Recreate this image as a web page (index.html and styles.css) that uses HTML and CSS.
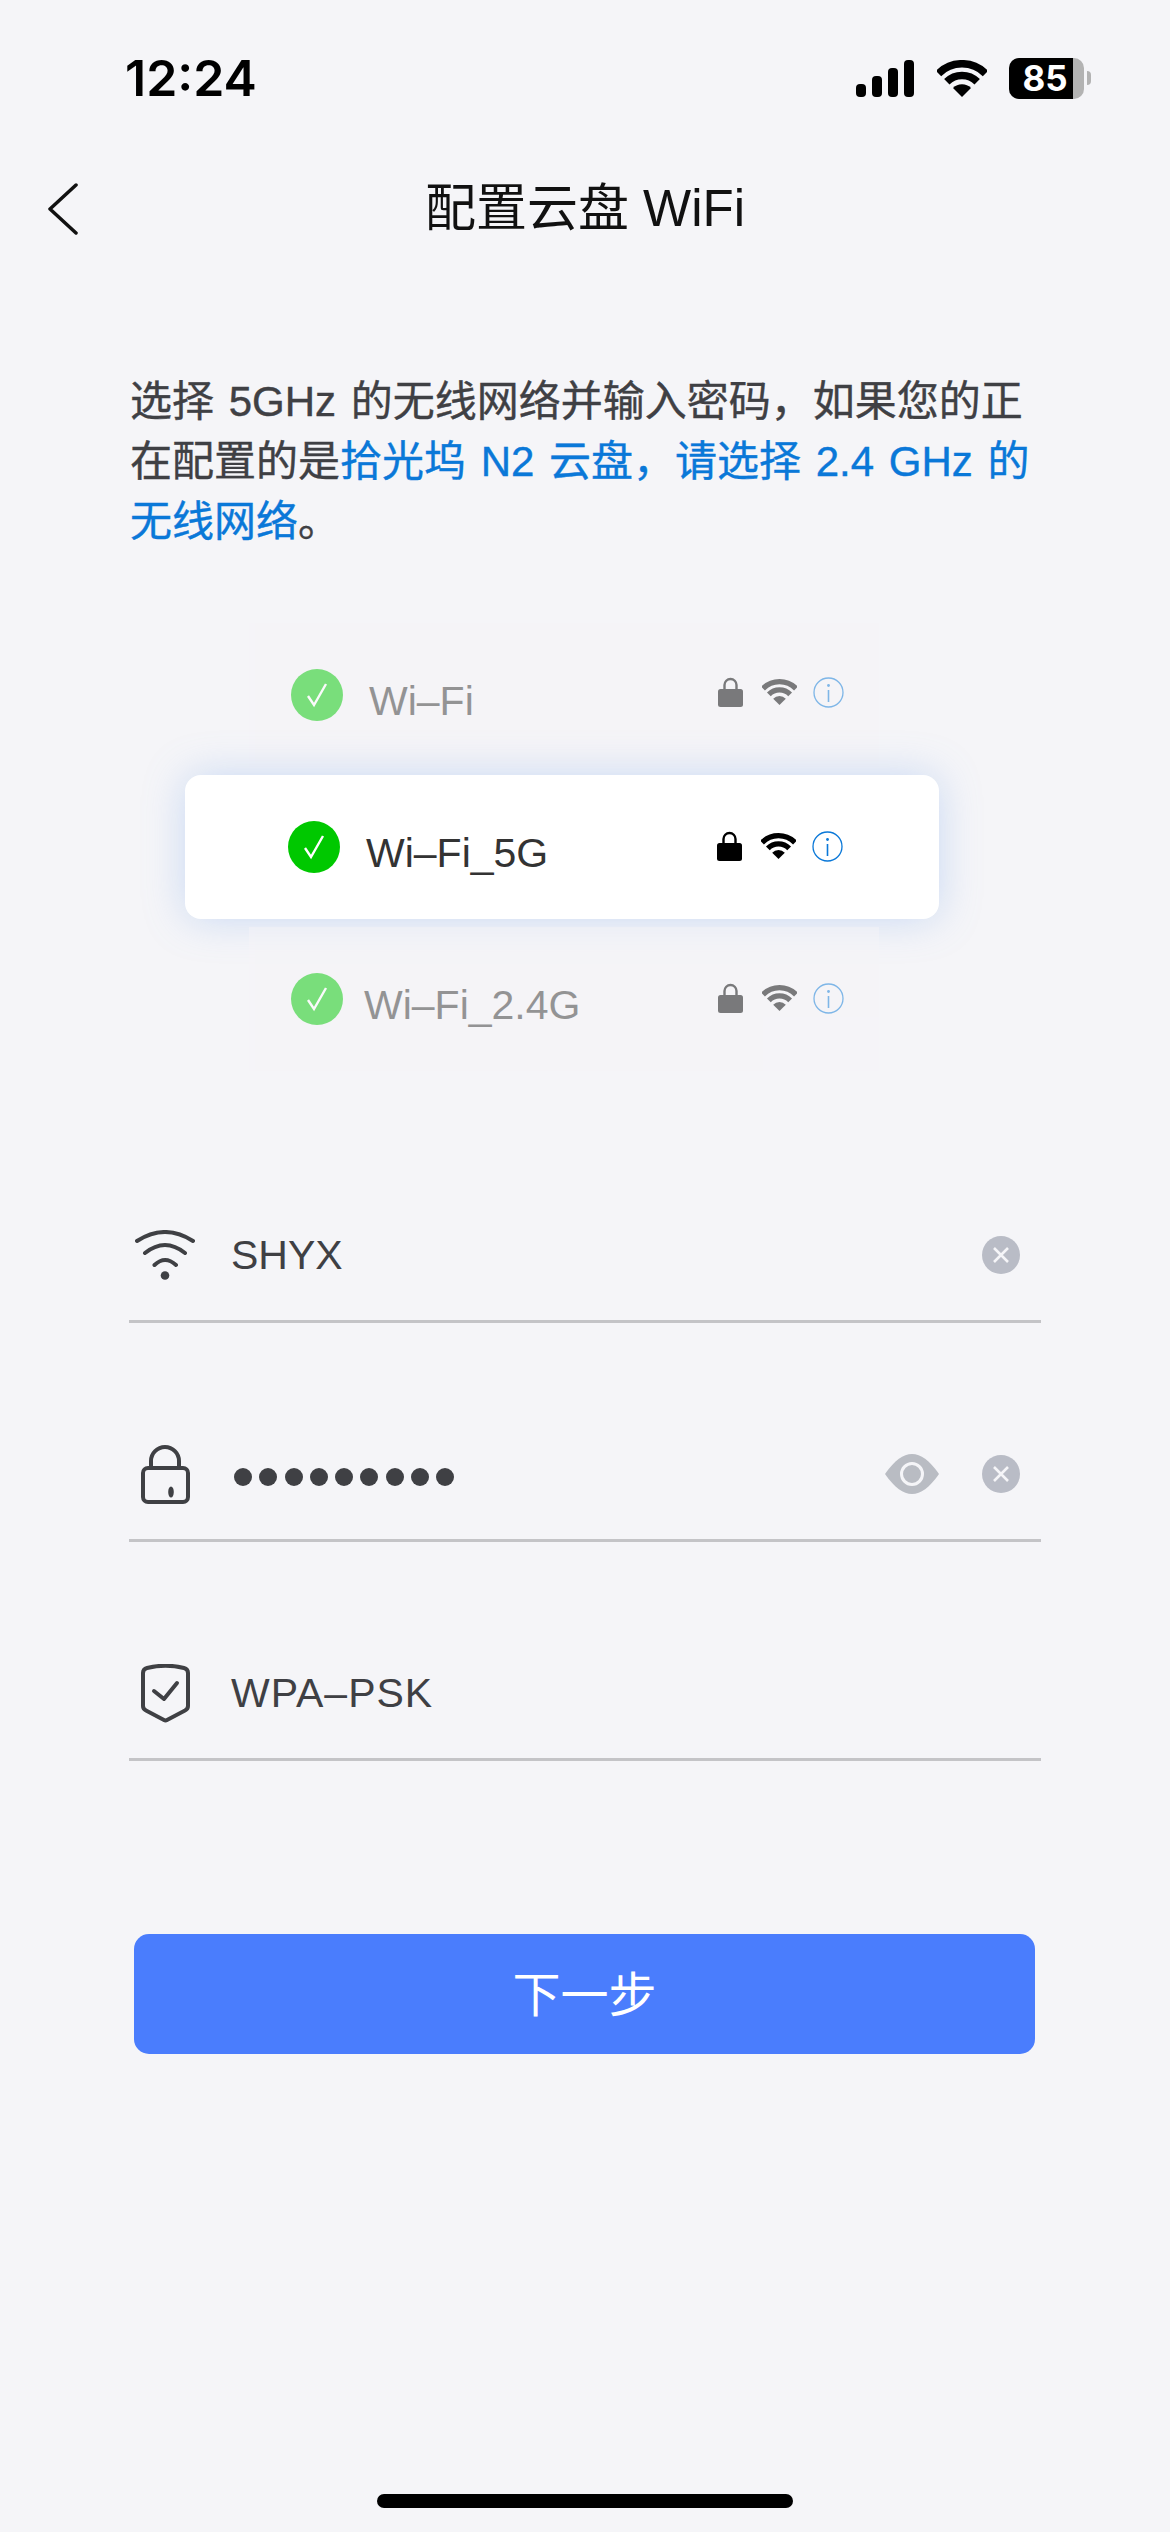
FILE: index.html
```html
<!DOCTYPE html>
<html>
<head>
    <meta charset="utf-8">
    <link rel="stylesheet" href="styles.css">
</head>
<body>
    <svg class="defs" width="0" height="0">
        <symbol id="fan" viewBox="0 0 50 37"><path d="M1.5 13.5a33.2 33.2 0 0 1 47 0M9.8 21.8a21.5 21.5 0 0 1 30.4 0" fill="none" stroke="currentColor" stroke-width="7.6"/><path d="M25 37 16 28a12.7 12.7 0 0 1 18 0z" fill="currentColor"/></symbol>
        <symbol id="tick" viewBox="0 0 28 28"><path d="M5 15l6 9L23 3" fill="none" stroke="#fff" stroke-width="2.4"/></symbol>
        <symbol id="padlock" viewBox="0 0 25 30"><path d="M6.5 13V8a6 6 0 0 1 12 0v5" fill="none" stroke="currentColor" stroke-width="2.4"/><rect y="12" width="25" height="18" rx="2.5" fill="currentColor"/></symbol>
        <symbol id="info" viewBox="0 0 31 31"><circle cx="15.5" cy="15.5" r="14.5" fill="none" stroke="#0a78d8" stroke-width="1.3"/><rect x="14.7" y="13" width="1.6" height="12" fill="#0a78d8"/><circle cx="15.5" cy="8.5" r="1.4" fill="#0a78d8"/></symbol>
        <symbol id="cross" viewBox="0 0 20 20"><path d="M3 3l14 14M17 3 3 17" stroke="#f5f5f8" stroke-width="2.6"/></symbol>
    </svg>

    <div class="statusbar">
        <span class="time">12:24</span>
        <div class="status-icons">
            <svg class="signal" width="58" height="37" viewBox="0 0 58 37"><rect x="0" y="24" width="10" height="13" rx="4"/><rect x="16" y="16" width="10" height="21" rx="4"/><rect x="32" y="8" width="10" height="29" rx="4"/><rect x="48" y="0" width="10" height="37" rx="4"/></svg>
            <svg class="wifi-status" width="50" height="37"><use href="#fan"/></svg>
            <div class="battery"><span class="battery-fill">85</span></div>
            <span class="battery-tip"></span>
        </div>
    </div>

    <div class="navbar">
        <svg class="back" width="32" height="52" viewBox="0 0 32 52"><path d="M29 2 3 26l26 24" fill="none" stroke="#111" stroke-width="3.5" stroke-linecap="round" stroke-linejoin="round"/></svg>
        <h1>配置云盘 WiFi</h1>
    </div>

    <p class="intro">选择 5GHz 的无线网络并输入密码，如果您的正在配置的是<span class="link">拾光坞 N2 云盘，请选择 2.4 GHz 的无线网络</span>。</p>

    <div class="wifi-demo">
        <div class="wifi-row faded">
            <span class="check"><svg width="28" height="28"><use href="#tick"/></svg></span>
            <span class="wifi-name">Wi–Fi</span>
            <div class="row-icons">
                <svg class="row-lock" width="25" height="30"><use href="#padlock"/></svg>
                <svg width="35" height="26"><use href="#fan"/></svg>
                <svg width="31" height="31"><use href="#info"/></svg>
            </div>
        </div>
        <div class="wifi-row selected">
            <span class="check"><svg width="28" height="28"><use href="#tick"/></svg></span>
            <span class="wifi-name">Wi–Fi_5G</span>
            <div class="row-icons">
                <svg class="row-lock" width="25" height="30"><use href="#padlock"/></svg>
                <svg width="35" height="26"><use href="#fan"/></svg>
                <svg width="31" height="31"><use href="#info"/></svg>
            </div>
        </div>
        <div class="wifi-row faded">
            <span class="check"><svg width="28" height="28"><use href="#tick"/></svg></span>
            <span class="wifi-name narrow">Wi–Fi_2.4G</span>
            <div class="row-icons">
                <svg class="row-lock" width="25" height="30"><use href="#padlock"/></svg>
                <svg width="35" height="26"><use href="#fan"/></svg>
                <svg width="31" height="31"><use href="#info"/></svg>
            </div>
        </div>
    </div>

    <div class="form-group">
        <div class="field">
            <svg class="field-icon" width="60" height="50" viewBox="0 0 60 50"><path d="M2 11Q30-7 58 11M10 23Q30 7 50 23M19.500 35Q30 25 41 35" fill="none" stroke="#3f4044" stroke-width="4" stroke-linecap="round"/><circle cx="30" cy="45.500" r="4.300" fill="#3f4044"/></svg>
            <span class="field-value">SHYX</span>
            <span class="clear"><svg width="20" height="20"><use href="#cross"/></svg></span>
        </div>
        <div class="field">
            <svg class="field-icon" width="60" height="59" viewBox="0 0 60 59"><path d="M16 23v-7a14 14 0 0 1 28 0v7" fill="none" stroke="#3f4044" stroke-width="4"/><rect x="8" y="23" width="45" height="34" rx="5" fill="none" stroke="#3f4044" stroke-width="4"/><ellipse cx="36" cy="47" rx="2.800" ry="5.500" fill="#3f4044"/></svg>
            <div class="dots"><i></i><i></i><i></i><i></i><i></i><i></i><i></i><i></i><i></i></div>
            <svg class="eye" width="54" height="40" viewBox="0 0 54 40"><path d="M0 20C10 6 18 0 27 0S44 6 54 20C44 34 36 40 27 40S10 34 0 20z" fill="#b9bcc3"/><circle cx="27" cy="20" r="10.500" fill="none" stroke="#f5f5f8" stroke-width="3"/></svg>
            <span class="clear"><svg width="20" height="20"><use href="#cross"/></svg></span>
        </div>
        <div class="field">
            <svg class="field-icon" width="60" height="59" viewBox="0 0 60 59"><path d="M8 9c0-3 2-4.500 4-5 12-3 25-3 37 0 2 .5 4 2 4 5v33c0 2-1 3.500-3 4.500L32 56c-1 .6-2 .6-3 0L11 46.500c-2-1-3-2.500-3-4.500z" fill="none" stroke="#3f4044" stroke-width="4" stroke-linejoin="round"/><path d="M19 27l10 8 13-16" fill="none" stroke="#3f4044" stroke-width="4" stroke-linecap="round" stroke-linejoin="round"/></svg>
            <span class="field-value wide">WPA–PSK</span>
        </div>
    </div>

    <button class="btn-primary">下一步</button>

    <div class="home-indicator"></div>
</body>
</html>
```

FILE: styles.css
```css
html, body {
    margin: 0;
    padding: 0;
}

body {
    width: 1170px;
    height: 2532px;
    background: #f5f5f8;
    font-family: 'Liberation Sans', 'Noto Sans CJK SC', sans-serif;
    color: #3f4044;
    overflow: hidden;
    display: flex;
    flex-direction: column;
}

.defs {
    display: none;
}

.statusbar {
    display: flex;
    justify-content: space-between;
    align-items: center;
    height: 48px;
    margin-top: 54px;
    padding: 0 79px 0 125px;
}

.time {
    font-family: 'Inter', sans-serif;
    font-size: 50px;
    font-weight: 600;
    color: #000;
}

.status-icons {
    display: flex;
    align-items: center;
    color: #000;
}

.wifi-status {
    margin-left: 23px;
    margin-right: 22px;
}

.battery {
    width: 75px;
    height: 41px;
    border-radius: 10px;
    overflow: hidden;
    background: #b3b3b3;
}

.battery-fill {
    display: block;
    width: 56px;
    height: 41px;
    padding-left: 8px;
    background: #000;
    color: #fff;
    font-family: 'Inter', sans-serif;
    font-size: 35px;
    font-weight: 700;
    line-height: 41px;
    text-align: center;
}

.battery-tip {
    width: 4px;
    height: 14px;
    margin-left: 3px;
    border-radius: 0 4px 4px 0;
    background: #b3b3b3;
}

.navbar {
    position: relative;
    display: flex;
    justify-content: center;
    align-items: center;
    height: 60px;
    margin-top: 73px;
}

.navbar h1 {
    margin: 0 0 3px;
    font-size: 51px;
    font-weight: 400;
    color: #111;
}

.back {
    position: absolute;
    left: 47px;
    top: 8px;
}

.intro {
    margin: 137px 0 0 130px;
    width: 910px;
    font-size: 42px;
    line-height: 60px;
    word-spacing: 3px;
    -webkit-text-stroke: 0.4px currentColor;
    color: #3f4044;
}

.link {
    color: #0a78d8;
}

.wifi-demo {
    display: flex;
    flex-direction: column;
    margin: 71px 0 0 185px;
    width: 754px;
}

.wifi-row {
    display: flex;
    align-items: center;
    height: 144px;
}

.wifi-row.faded {
    margin: 0 60px 0 64px;
    padding: 0 35px 0 42px;
    background: #f5f4f7;
    opacity: 0.5;
}

.wifi-row.selected {
    position: relative;
    margin: 8px 0;
    padding: 0 96px 0 103px;
    background: #fff;
    border-radius: 16px;
    box-shadow: 0 0 40px rgba(120, 165, 235, 0.35);
}

.check {
    display: flex;
    justify-content: center;
    align-items: center;
    flex-shrink: 0;
    width: 52px;
    height: 52px;
    border-radius: 50%;
    background: #00c800;
}

.wifi-name {
    margin: 12px 0 0 26px;
    font-size: 41px;
    color: #333;
}

.wifi-name.narrow {
    margin-left: 21px;
}

.row-icons {
    display: flex;
    align-items: center;
    gap: 16px;
    margin: 0 0 6px auto;
    color: #000;
}

.row-lock {
    margin-right: 3px;
}

.selected .row-icons,
.faded:last-child .row-icons {
    margin-bottom: 2px;
}

.form-group {
    display: flex;
    flex-direction: column;
    gap: 86px;
    margin: 119px 0 0 129px;
    width: 912px;
}

.field {
    display: flex;
    align-items: center;
    height: 130px;
    padding-left: 6px;
    border-bottom: 3px solid #c4c4c7;
}

.field-icon {
    flex-shrink: 0;
}

.field-value {
    margin-left: 36px;
    font-size: 41px;
    color: #3f4044;
}

.field-value.wide {
    letter-spacing: 1px;
}

.dots {
    display: flex;
    gap: 7.25px;
    margin: 5px 0 0 39px;
}

.dots i {
    width: 18px;
    height: 18px;
    border-radius: 50%;
    background: #3f4044;
}

.eye {
    margin-left: auto;
    margin-right: 43px;
}

.clear {
    display: flex;
    justify-content: center;
    align-items: center;
    width: 38px;
    height: 38px;
    margin-left: auto;
    margin-right: 21px;
    border-radius: 50%;
    background: #b9bcc6;
}

.eye + .clear {
    margin-left: 0;
}

.btn-primary {
    width: 901px;
    height: 120px;
    margin: 173px 0 0 134px;
    padding-bottom: 8px;
    background: #4a7dfd;
    color: #fff;
    border: none;
    border-radius: 15px;
    font-family: inherit;
    font-size: 48px;
}

.home-indicator {
    width: 416px;
    height: 14px;
    margin: auto 0 24px 377px;
    border-radius: 7px;
    background: #000;
}
```
